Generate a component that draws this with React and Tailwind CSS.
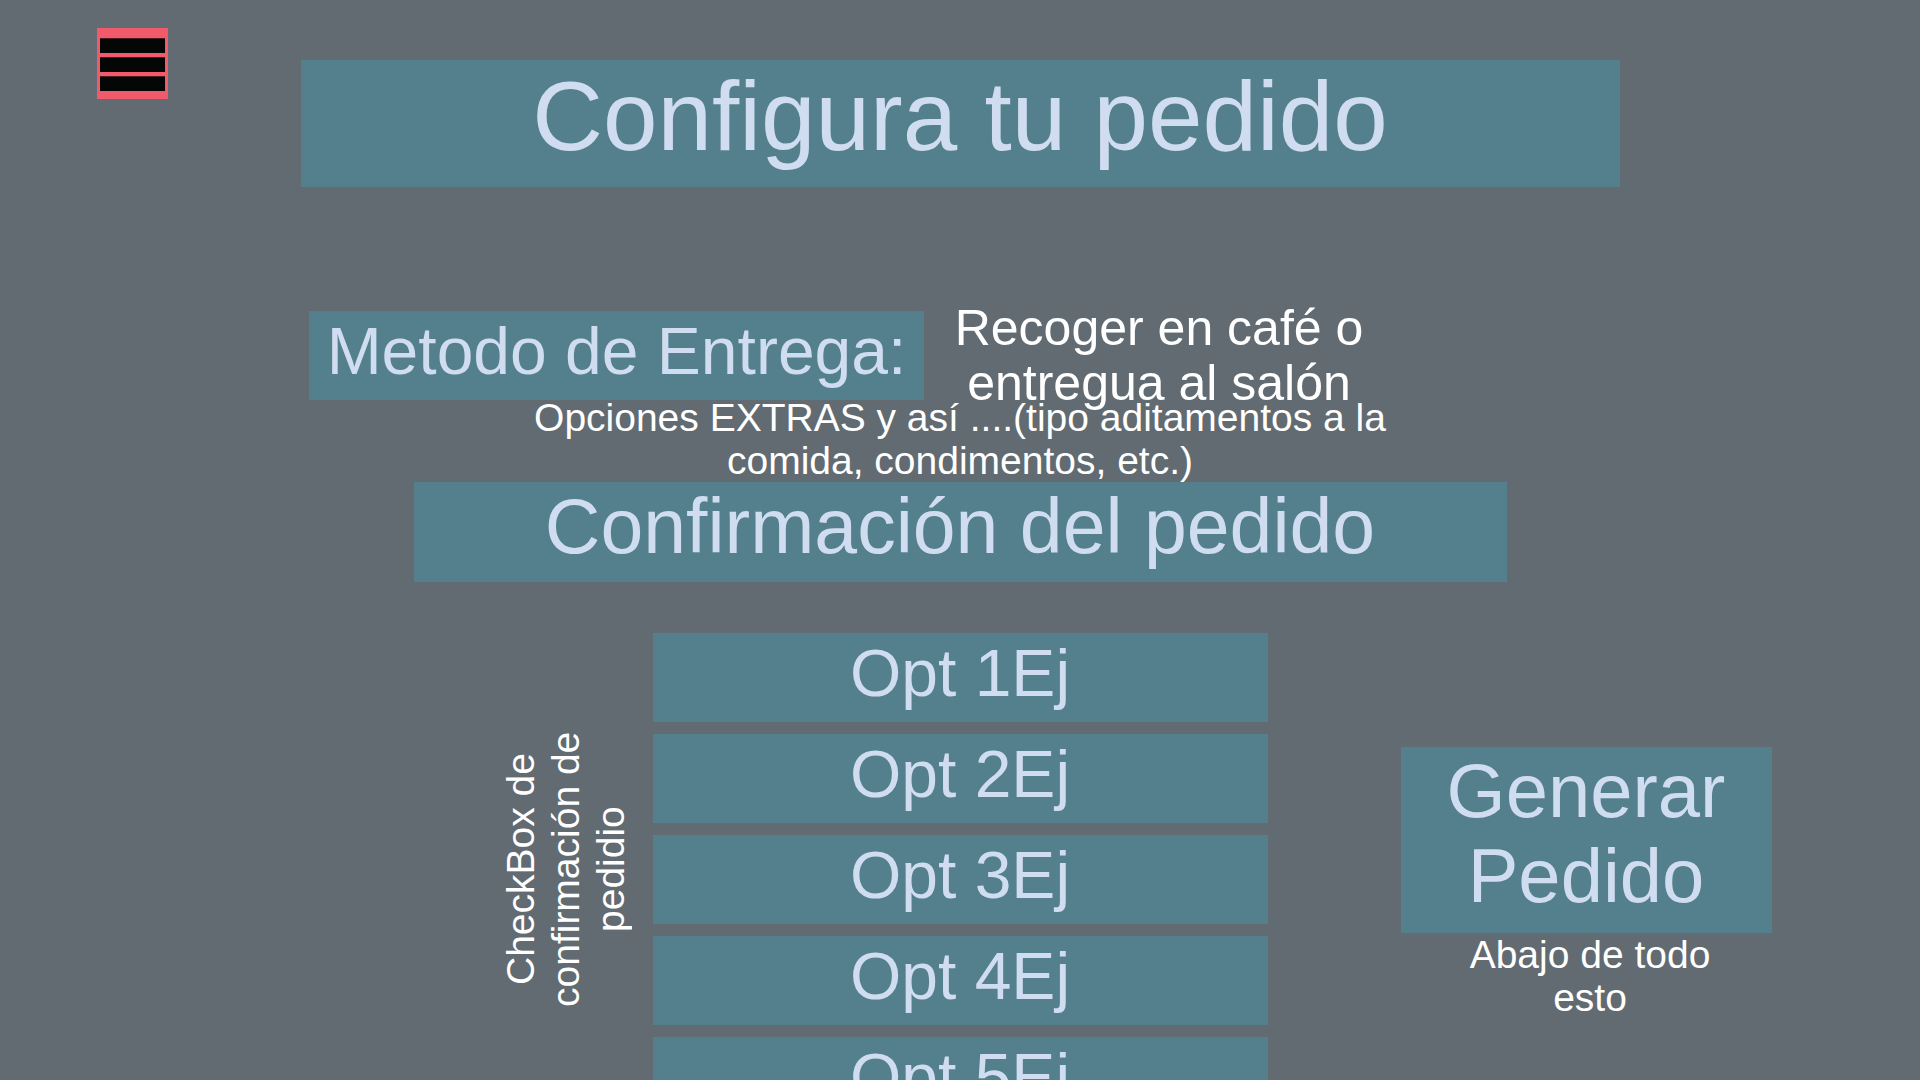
const opciones = ['Opt 1Ej', 'Opt 2Ej', 'Opt 3Ej', 'Opt 4Ej', 'Opt 5Ej']

function MenuButton() {
    return (
        <button className="absolute left-[97px] top-[28px] flex h-[71px] w-[71px] flex-col gap-[4px] bg-[#f05a6a] px-[3px] pb-[6px] pt-[10px]">
            <span className="h-[15px] w-full border-t border-[#4a1c22] bg-[#050707]" />
            <span className="h-[15px] w-full border-t border-[#4a1c22] bg-[#050707]" />
            <span className="h-[15px] w-full border-t border-[#4a1c22] bg-[#050707]" />
        </button>
    )
}

export default function App() {
    return (
        <div className="relative h-screen overflow-hidden bg-[#616b71] font-['Liberation_Sans',Arial,sans-serif]">
            <MenuButton />

            <div className="pt-[60px]">
                <h1 className="mx-auto h-[127px] w-[1319px] bg-[#53808c] text-center text-[98px] leading-[112px] text-[#d0dcf0]">
                    Configura tu pedido
                </h1>
            </div>

            <div className="mt-[124px] flex h-[89px] items-center pl-[309px]">
                <div className="h-[89px] w-[615px] shrink-0 bg-[#53808c] pt-[2px] text-center text-[66px] leading-[76px] text-[#d0dcf0]">
                    Metodo de Entrega:
                </div>
                <p className="w-[470px] shrink-0 text-center text-[50px] leading-[55px] text-white">
                    Recoger en café o entregua al salón
                </p>
            </div>

            <p className="mx-auto -mt-[4px] w-[900px] text-center text-[39px] leading-[43px] text-white">
                Opciones EXTRAS y así ....(tipo aditamentos a la comida, condimentos, etc.)
            </p>

            <h2 className="mx-auto mt-0 h-[100px] w-[1093px] bg-[#53808c] text-center text-[77px] leading-[88px] text-[#d0dcf0]">
                Confirmación del pedido
            </h2>

            <div className="mt-[51px] grid grid-cols-[1fr_615px_1fr]">
                <div className="flex justify-end pr-[20px]">
                    <p className="mt-[86px] h-[300px] rotate-180 text-center text-[39px] leading-[45px] text-white [writing-mode:vertical-rl]">
                        CheckBox de confirmación de pedidio
                    </p>
                </div>

                <div className="flex flex-col gap-[12px]">
                    {opciones.map((op) => (
                        <div
                            key={op}
                            className="h-[89px] bg-[#53808c] pt-[2px] text-center text-[66px] leading-[76px] text-[#d0dcf0]"
                        >
                            {op}
                        </div>
                    ))}
                </div>

                <div className="pl-[133px] pt-[114px]">
                    <button className="h-[186px] w-[371px] bg-[#53808c] pb-[15px] text-center text-[76px] leading-[85px] text-[#d0dcf0]">
                        Generar Pedido
                    </button>
                    <p className="ml-[4px] w-[371px] px-[40px] text-center text-[39px] leading-[43px] text-white">
                        Abajo de todo esto
                    </p>
                </div>
            </div>
        </div>
    )
}
